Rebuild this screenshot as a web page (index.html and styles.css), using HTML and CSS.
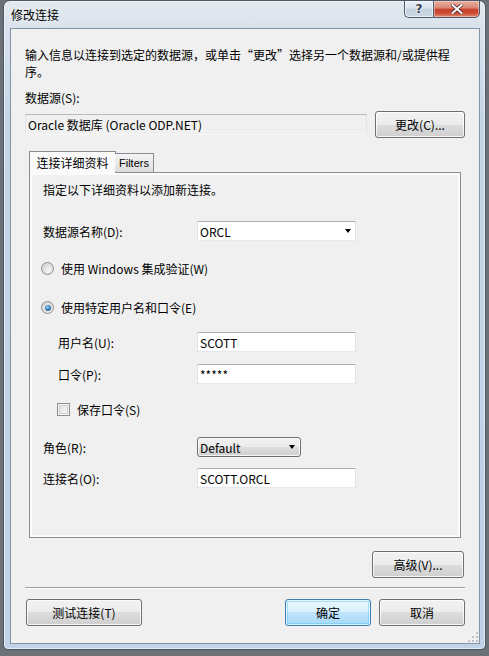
FILE: index.html
```html
<!DOCTYPE html>
<html lang="zh-CN">
<head>
<meta charset="utf-8">
<title>修改连接</title>
<link rel="stylesheet" href="styles.css">
</head>
<body>
<div class="window">
  <div class="titlebar">
    <span class="title">修改连接</span>
    <div class="caption">
      <div class="cbtn help"><span>?</span></div>
      <div class="cbtn close">
        <svg width="12" height="10" viewBox="0 0 12 10"><path d="M1.5 1 L10.5 9 M10.5 1 L1.5 9" stroke="#3a2020" stroke-width="3.4" stroke-linecap="square"/><path d="M1.5 1 L10.5 9 M10.5 1 L1.5 9" stroke="#ffffff" stroke-width="2" stroke-linecap="square"/></svg>
      </div>
    </div>
  </div>
  <div class="client">
    <p class="intro">输入信息以连接到选定的数据源，或单击“更改”选择另一个数据源和/或提供程<br>序。</p>
    <div class="label-ds">数据源(S):</div>
    <div class="ds-row">
      <div class="ro-box">Oracle 数据库 (Oracle ODP.NET)</div>
      <div class="btn btn-change">更改(C)...</div>
    </div>
    <div class="tabs">
      <div class="tab active">连接详细资料</div>
      <div class="tab inactive">Filters</div>
    </div>
    <div class="panel">
      <div class="p-intro">指定以下详细资料以添加新连接。</div>
      <div class="prow r-dsn">
        <span class="plabel">数据源名称(D):</span>
        <div class="tb combo-edit"><span>ORCL</span><i class="arrow"></i></div>
      </div>
      <div class="choice r-radio1">
        <span class="radio"></span><span>使用 Windows 集成验证(W)</span>
      </div>
      <div class="choice r-radio2">
        <span class="radio checked"></span><span>使用特定用户名和口令(E)</span>
      </div>
      <div class="prow r-user">
        <span class="plabel ind">用户名(U):</span>
        <div class="tb">SCOTT</div>
      </div>
      <div class="prow r-pwd">
        <span class="plabel ind">口令(P):</span>
        <div class="tb pwd">*****</div>
      </div>
      <div class="choice r-check">
        <span class="checkbox"></span><span>保存口令(S)</span>
      </div>
      <div class="prow r-role">
        <span class="plabel">角色(R):</span>
        <div class="combo-list"><span>Default</span><i class="arrow"></i></div>
      </div>
      <div class="prow r-conn">
        <span class="plabel">连接名(O):</span>
        <div class="tb">SCOTT.ORCL</div>
      </div>
    </div>
    <div class="adv-row">
      <div class="btn btn-adv">高级(V)...</div>
    </div>
    <div class="separator"></div>
    <div class="bottom-row">
      <div class="btn btn-test">测试连接(T)</div>
      <div class="spacer"></div>
      <div class="btn btn-ok default">确定</div>
      <div class="btn btn-cancel">取消</div>
    </div>
    <div class="grip"></div>
  </div>
</div>
</body>
</html>
```
FILE: styles.css
```css
* { box-sizing: border-box; }
html, body { margin: 0; padding: 0; }
body {
  width: 489px;
  height: 656px;
  overflow: hidden;
  background: #6c7178;
  font-family: "Noto Sans CJK SC", "Noto Sans", sans-serif;
  font-size: 12px;
  color: #000;
}
.window {
  margin-left: 3px;
  width: 483px;
  height: 650px;
  border: 1px solid #4b5866;
  border-radius: 7px 7px 5px 5px;
  background: linear-gradient(180deg, #e3e9ef 0px, #d9e2ec 28px, #c4d5e6 120px, #bfd2e6 100%);
  box-shadow: inset 0 0 0 1px rgba(255,255,255,0.55);
  padding: 0 5px 5px 6px;
  display: flex;
  flex-direction: column;
}
.titlebar {
  height: 27px;
  display: flex;
  align-items: flex-start;
}
.title {
  margin-left: 1px;
  height: 27px;
  line-height: 27px;
  color: #000;
  text-shadow: 0 0 6px rgba(255,255,255,0.9);
}
.caption {
  margin-left: auto;
  margin-top: -1px;
  display: flex;
  height: 18px;
}
.cbtn {
  height: 18px;
  border: 1px solid #4a5a6c;
  display: flex;
  align-items: center;
  justify-content: center;
}
.help {
  width: 29px;
  border-right: none;
  border-radius: 0 0 0 5px;
  background: linear-gradient(180deg, #e9eef4 0%, #dbe3ec 45%, #c3d0de 50%, #ccd8e5 100%);
  box-shadow: inset 0 0 0 1px rgba(255,255,255,0.6);
}
.help span {
  font-family: "DejaVu Sans", sans-serif;
  font-weight: bold;
  font-size: 12px;
  color: #33414f;
  text-shadow: 0 0 2px #fff, 0 0 2px #fff;
  line-height: 1;
}
.close {
  width: 47px;
  border-radius: 0 0 5px 0;
  background: linear-gradient(180deg, #eab0a2 0%, #d98574 45%, #c7412f 50%, #cc4a34 75%, #e08a6c 100%);
  box-shadow: inset 0 0 0 1px rgba(255,220,210,0.5);
}
.client {
  position: relative;
  height: 616px;
  border: 1px solid #8394a6;
  background: #f0f0f0;
  padding: 0 14px;
}
.intro {
  margin: 17px 0 0 0;
  line-height: 17px;
  font-family: "Noto Sans CJK SC", sans-serif;
}
.label-ds {
  margin-top: 9px;
  line-height: 17px;
}
.ds-row {
  margin-top: 5px;
  height: 27px;
  display: flex;
  align-items: center;
}
.ro-box {
  width: 342px;
  height: 21px;
  border: 1px solid;
  border-color: #b9bbc0 #e2e3ea #f8f8f8 #e2e3ea;
  background: #f0f0f0;
  padding-left: 2px;
  display: flex;
  align-items: center;
}
.btn {
  height: 27px;
  border: 1px solid #707070;
  border-radius: 3px;
  background: linear-gradient(180deg, #f2f2f2 0%, #ebebeb 50%, #dddddd 50%, #cfcfcf 100%);
  box-shadow: inset 0 0 0 1px rgba(255,255,255,0.8);
  display: flex;
  align-items: center;
  justify-content: center;
}
.btn-change { width: 90px; margin-left: 8px; }
.tabs {
  margin-top: 13px;
  margin-left: 4px;
  height: 21px;
  display: flex;
  align-items: flex-end;
  position: relative;
  z-index: 1;
}
.tab {
  border: 1px solid #898c95;
  border-bottom: none;
  display: flex;
  align-items: center;
  justify-content: center;
}
.tab.active {
  width: 87px;
  height: 22px;
  margin-bottom: -1px;
  background: #fafafa;
  padding-bottom: 1px;
}
.tab.inactive {
  width: 39px;
  height: 19px;
  margin-left: -1px;
  border-left: none;
  background: linear-gradient(180deg, #f4f4f4 0%, #e9e9e9 50%, #dcdcdc 100%);
  font-family: "Liberation Sans", sans-serif;
  font-size: 11px;
}
.panel {
  margin-left: 4px;
  width: 432px;
  height: 366px;
  border: 1px solid #898c95;
  background: #f0f0f0;
  box-shadow: inset 0 0 0 2px #fbfbfb;
  padding-left: 13px;
}
.p-intro {
  margin-top: 8px;
  line-height: 17px;
}
.prow {
  display: flex;
  align-items: center;
  height: 20px;
}
.plabel { width: 154px; flex: none; }
.plabel.ind { padding-left: 15px; }
.r-dsn { margin-top: 23px; }
.r-user { margin-top: 16px; }
.r-pwd { margin-top: 12px; }
.r-role { margin-top: 19px; }
.r-conn { margin-top: 11px; }
.tb {
  width: 159px;
  height: 20px;
  background: #fff;
  border: 1px solid;
  border-color: #abadb3 #e2e3ea #e3e9ef #e2e3ea;
  padding-left: 2px;
  display: flex;
  align-items: center;
}
.tb.pwd { letter-spacing: 0; }
.arrow {
  margin-left: auto;
  width: 0;
  height: 0;
  border-left: 3.5px solid transparent;
  border-right: 3.5px solid transparent;
  border-top: 4px solid #000;
}
.combo-edit .arrow { margin-right: 4px; }
.combo-list {
  width: 104px;
  height: 20px;
  border: 1px solid #707070;
  border-radius: 3px;
  background: linear-gradient(180deg, #f2f2f2 0%, #ebebeb 50%, #dddddd 50%, #cfcfcf 100%);
  box-shadow: inset 0 0 0 1px rgba(255,255,255,0.8);
  padding-left: 2px;
  display: flex;
  align-items: center;
}
.combo-list .arrow { margin-right: 5px; }
.choice {
  display: flex;
  align-items: center;
  height: 17px;
}
.r-radio1 { margin-top: 19px; margin-left: -2px; }
.r-radio2 { margin-top: 22px; margin-left: -2px; }
.r-check { margin-top: 17px; margin-left: 14px; }
.radio {
  width: 13px;
  height: 13px;
  border-radius: 50%;
  border: 1px solid #8a8d92;
  background: radial-gradient(circle at 60% 65%, #f4f4f4 0%, #dcdcdc 60%, #cbcbcb 100%);
  margin-right: 7px;
  flex: none;
  position: relative;
}
.radio.checked::after {
  content: "";
  position: absolute;
  left: 2.5px;
  top: 2.5px;
  width: 6px;
  height: 6px;
  border-radius: 50%;
  background: radial-gradient(circle at 40% 35%, #a6d3f3 0%, #3c83c0 45%, #16466f 100%);
}
.checkbox {
  width: 13px;
  height: 13px;
  border: 1px solid #8e8f8f;
  background: linear-gradient(135deg, #dcdcdc 0%, #f0f0f0 60%, #fafafa 100%);
  box-shadow: inset 0 0 0 1px #f4f4f4, inset 0 0 0 2px #cfcfcf;
  margin-right: 7px;
  flex: none;
}
.adv-row {
  margin-top: 13px;
  display: flex;
  justify-content: flex-end;
}
.btn-adv { width: 92px; margin-right: 1px; }
.separator {
  margin-top: 9px;
  height: 2px;
  border-top: 1px solid #a0a0a0;
  border-bottom: 1px solid #ffffff;
}
.bottom-row {
  margin-top: 10px;
  display: flex;
}
.btn-test { width: 116px; margin-left: 1px; }
.spacer { flex: 1; }
.btn-ok { width: 86px; }
.btn-cancel { width: 86px; margin-left: 8px; }
.btn.default {
  border-color: #3c7fb1;
  background: linear-gradient(180deg, #eaf6fd 0%, #d9f0fc 50%, #bee6fd 50%, #a7d9f5 100%);
  box-shadow: inset 0 0 0 1px rgba(255,255,255,0.7), inset 0 0 0 2px rgba(92,196,240,0.45);
}
.grip {
  position: absolute;
  right: 1px;
  bottom: 1px;
  width: 11px;
  height: 11px;
  background-image: radial-gradient(circle, #b8bcc2 0.8px, transparent 1.2px);
  background-size: 4px 4px;
  clip-path: polygon(100% 0, 100% 100%, 0 100%);
}
```
